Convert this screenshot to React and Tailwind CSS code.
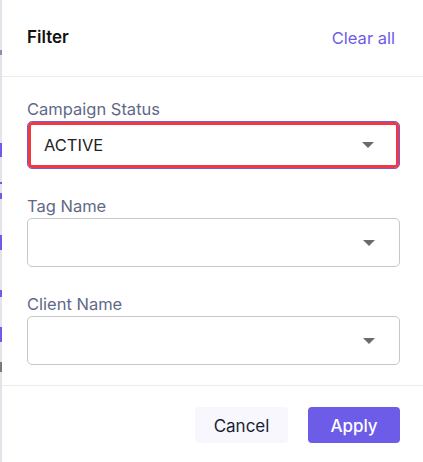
import React from "react";

const Caret = () => (
    <svg width="14" height="8" viewBox="0 0 14 8" className="shrink-0">
        <path d="M1 1 L13 1 L7 7 Z" fill="#6b6b6b" />
    </svg>
);

const SelectField = ({ label, value, active }) => (
    <div className="flex flex-col">
        <label className="text-[16.5px] leading-[24px] text-[#5f6987]">{label}</label>
        {active ? (
            <div className="rounded-[5px] border border-[#6c5ce7]">
                <div className="h-[46px] rounded-[4px] border-[3px] border-[#ee3a43] flex items-center justify-between pl-[13px] pr-[21px]">
                    <span className="text-[16.5px] text-[#222222]">{value}</span>
                    <Caret />
                </div>
            </div>
        ) : (
            <div className="h-[49px] rounded-[5px] border border-[#c7c7c7] flex items-center justify-between pl-[16px] pr-[23px]">
                <span className="text-[16.5px] text-[#222222]">{value}</span>
                <Caret />
            </div>
        )}
    </div>
);

export default function App() {
    return (
        <div className="flex w-[423px] h-[462px] bg-white" style={{ fontFamily: "Inter, 'Noto Sans', sans-serif" }}>
            {/* strip of the page behind the drawer */}
            <div className="w-[2px] shrink-0 bg-[#e3e3ea] flex flex-col">
                <div className="h-[50px]" />
                <div className="h-[5px] bg-[#8a8fb0]" />
                <div className="h-[88px]" />
                <div className="h-[14px] bg-[#6c5ce7]" />
                <div className="h-[25px]" />
                <div className="h-[2px] bg-[#6c5ce7]" />
                <div className="h-[9px]" />
                <div className="h-[6px] bg-[#6c5ce7]" />
                <div className="h-[36px]" />
                <div className="h-[15px] bg-[#6c5ce7]" />
                <div className="h-[40px]" />
                <div className="h-[7px] bg-[#6c5ce7]" />
                <div className="h-[30px]" />
                <div className="h-[15px] bg-[#6c5ce7]" />
                <div className="h-[20px]" />
                <div className="h-[10px] bg-[#7a7a7a]" />
            </div>

            <div className="flex-1 flex flex-col">
                {/* header */}
                <div className="h-[77px] flex items-center justify-between pl-[25px] pr-[28px] border-b border-[#ececf0]">
                    <span className="text-[17px] font-semibold text-[#111111]">Filter</span>
                    <button className="text-[16.5px] text-[#6c5ce7]">Clear all</button>
                </div>

                {/* body */}
                <div className="flex-1 flex flex-col gap-[25px] pl-[25px] pr-[23px] pt-[20px]">
                    <SelectField label="Campaign Status" value="ACTIVE" active />
                    <SelectField label="Tag Name" value="" />
                    <SelectField label="Client Name" value="" />
                </div>

                {/* footer */}
                <div className="h-[77px] border-t border-[#ececf0] flex items-start justify-end gap-[20px] pt-[21px] pr-[23px]">
                    <button className="w-[93px] h-[36px] pt-[3px] rounded-[4px] bg-[#f8f7fe] text-[17px] text-[#1c1e36]">Cancel</button>
                    <button className="w-[92px] h-[36px] pt-[3px] rounded-[4px] bg-[#6c5ce7] text-[17px] font-medium text-white">Apply</button>
                </div>
            </div>
        </div>
    );
}
